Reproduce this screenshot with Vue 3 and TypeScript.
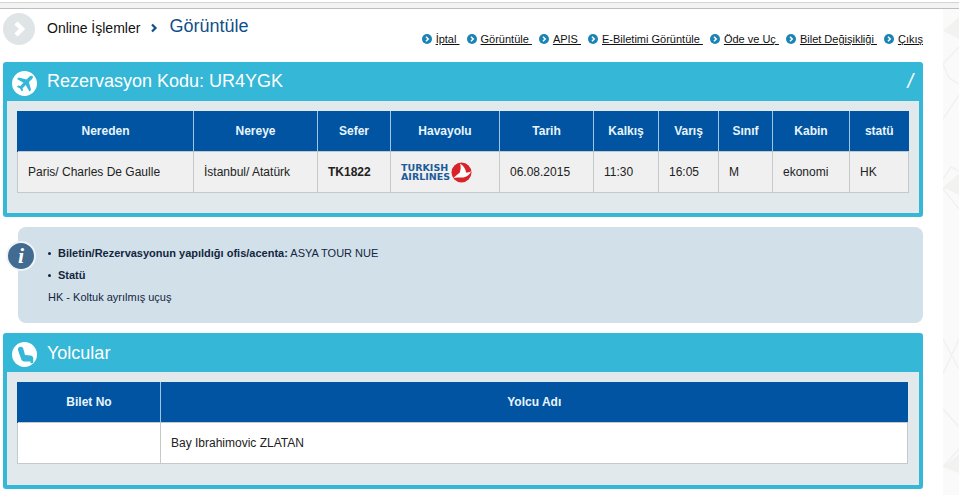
<template>
  <div class="page">
    <div class="topbar"></div>

    <!-- faint wallpaper on the right edge -->
    <svg class="wallpaper" width="16" height="486" viewBox="0 0 16 486">
      <path d="M16 38L0 55l6 14 10 6M0 110l16-24M0 170l8-12 8 4M16 200L0 180l16-8M0 330l16 30M16 330L0 365M0 400l16 18M16 440L0 458" fill="none" stroke="#f1f1f1" stroke-width="1.500" />
      <path d="M16 8L0 22l16 8zM16 165L0 178l16 8zM16 445L0 458l16 6z" fill="#f2f2f0" />
    </svg>

    <div class="crumbs">
      <span class="crumb-icon">
        <svg width="32" height="32" viewBox="0 0 32 32"><path d="M13 10l6 6-6 6" fill="none" stroke="#fff" stroke-width="4.5" /></svg>
      </span>
      <span class="crumb-text">Online İşlemler</span>
      <svg class="crumb-arrow" width="8" height="10" viewBox="0 0 8 10"><path d="M2 1.5L5.5 5 2 8.500" fill="none" stroke="#0f4f8a" stroke-width="2.2" /></svg>
      <span class="crumb-title">Görüntüle</span>
    </div>

    <div class="actions">
      <a v-for="link in links" :key="link" class="action">
        <span class="bullet">
          <svg width="10" height="10" viewBox="0 0 10 10"><path d="M4 2.8L6.2 5 4 7.2" fill="none" stroke="#fff" stroke-width="1.5" /></svg>
        </span>
        <span class="action-text">{{ link }}</span>
      </a>
    </div>

    <section class="panel first">
      <header class="panel-head">
        <span class="round">
          <svg width="22" height="22" viewBox="0 0 24 24"><path d="M20.500 3.500c-1-1-2.500-.7-3.500.3l-3.300 3.400-8.700-2.300-1.700 1.700 7 4.100-3.300 3.400-2.500-.4-1.300 1.300 3.400 1.900 1.900 3.400 1.300-1.300-.4-2.500 3.400-3.300 4.100 7 1.700-1.700-2.300-8.700 3.400-3.300c1-1 1.300-2.500.3-3.500z" fill="#35b7d8" /></svg>
        </span>
        <h2>Rezervasyon Kodu: UR4YGK</h2>
        <span class="slash">/</span>
      </header>
      <div class="panel-body">
        <table>
          <colgroup>
            <col v-for="(w, i) in flightCols" :key="i" :style="{ width: w + 'px' }" />
          </colgroup>
          <thead>
            <tr><th v-for="h in flightHead" :key="h">{{ h }}</th></tr>
          </thead>
          <tbody>
            <tr class="grey">
              <td>Paris/ Charles De Gaulle</td>
              <td>İstanbul/ Atatürk</td>
              <td><b>TK1822</b></td>
              <td class="logo-cell">
                <div class="thy">
                  <span class="thy-name">TURKISH<br />AIRLINES</span>
                  <svg width="21" height="21" viewBox="0 0 21 21">
                    <circle cx="10.5" cy="10.5" r="10" fill="#d8232a" />
                    <path d="M9 1.500C13 4 15 8 15 10.500 17 10.500 19 10 20 9 19 13 15 15.500 11 15.500 8 15.500 5 15 2.500 16 5 13.500 7 12 8.500 11 10 8 10 4 9 1.500z" fill="#fff" />
                  </svg>
                </div>
              </td>
              <td>06.08.2015</td>
              <td>11:30</td>
              <td>16:05</td>
              <td>M</td>
              <td>ekonomi</td>
              <td>HK</td>
            </tr>
          </tbody>
        </table>
      </div>
    </section>

    <div class="info">
      <span class="info-icon">i</span>
      <ul>
        <li><b>Biletin/Rezervasyonun yapıldığı ofis/acenta:</b> ASYA TOUR NUE</li>
        <li><b>Statü</b></li>
      </ul>
      <p>HK - Koltuk ayrılmış uçuş</p>
    </div>

    <section class="panel">
      <header class="panel-head">
        <span class="round">
          <svg width="22" height="22" viewBox="0 0 24 24"><path d="M5.500 3.500C7 2.500 9.500 3 10 4.700l2 7.300 6 .5c1.800.2 3 1.500 3 3.200V20c0 .6-.4 1-1 1h-2v-2H11c-1.500 0-2.500-.7-3-2L4.500 7C4 5.600 4.500 4.200 5.500 3.500z" fill="#35b7d8" /></svg>
        </span>
        <h2>Yolcular</h2>
      </header>
      <div class="panel-body">
        <table>
          <colgroup>
            <col style="width: 143px" />
            <col />
          </colgroup>
          <thead>
            <tr><th>Bilet No</th><th>Yolcu Adı</th></tr>
          </thead>
          <tbody>
            <tr>
              <td></td>
              <td>Bay Ibrahimovic ZLATAN</td>
            </tr>
          </tbody>
        </table>
      </div>
    </section>
  </div>
</template>

<script setup lang="ts">
const links: string[] = [
  'İptal ',
  'Görüntüle ',
  'APIS ',
  'E-Biletimi Görüntüle ',
  'Öde ve Uç ',
  'Bilet Değişikliği ',
  'Çıkış'
]

const flightHead: string[] = [
  'Nereden', 'Nereye', 'Sefer', 'Havayolu', 'Tarih',
  'Kalkış', 'Varış', 'Sınıf', 'Kabin', 'statü'
]

const flightCols: number[] = [176, 124, 73, 109, 94, 65, 60, 54, 77, 59]
</script>

<style>
html, body {
  background: #fff;
  overflow: hidden;
}
</style>

<style scoped>
.page {
  position: relative;
  width: 959px;
  height: 495px;
  font-family: "Liberation Sans", Arial, sans-serif;
  font-size: 12px;
  color: #222;
  overflow: hidden;
}
.wallpaper {
  position: absolute;
  left: 943px;
  top: 9px;
  background: #fafafa;
}
.topbar {
  height: 5px;
  margin-top: 2px;
  background: #f3f3f3;
  border-top: 1px solid #d4d4d4;
  border-bottom: 1px solid #bdbdbd;
}
.crumbs {
  display: flex;
  align-items: center;
  height: 32px;
  padding: 4px 0 0 3px;
}
.crumb-icon {
  width: 32px;
  height: 32px;
  border-radius: 50%;
  background: #dfe4e7;
  display: flex;
}
.crumb-text {
  margin: -3px 0 0 12px;
  font-size: 14px;
  color: #111;
}
.crumb-arrow {
  margin: -2px 0 0 10px;
}
.crumb-title {
  margin: -5px 0 0 11px;
  font-size: 18px;
  color: #0f4f8a;
}
.actions {
  display: flex;
  justify-content: flex-end;
  gap: 7px;
  width: 923px;
  margin-top: -13px;
  height: 14px;
}
.action {
  display: flex;
  align-items: center;
  font-size: 11px;
  color: #111;
}
.action-text {
  text-decoration: underline;
  white-space: pre;
}
.bullet {
  width: 10px;
  height: 10px;
  border-radius: 50%;
  background: #1b84b4;
  margin-right: 4px;
  display: flex;
}
.panel {
  width: 920px;
  margin-left: 3px;
  background: #35b7d8;
  border-radius: 3px;
  padding: 0 4px 4px;
  box-sizing: border-box;
}
.panel.first {
  margin-top: 16px;
}
.panel-head {
  height: 39px;
  display: flex;
  align-items: center;
  color: #fff;
}
.panel-head h2 {
  margin: 0 0 0 10px;
  font-size: 18px;
  font-weight: normal;
}
.panel:not(.first) h2 {
  margin-top: 2px;
}
.round {
  width: 25px;
  height: 25px;
  margin: 4px 0 0 5px;
  border-radius: 50%;
  background: #fff;
  display: flex;
  align-items: center;
  justify-content: center;
}
.slash {
  margin-left: auto;
  margin-right: 6px;
  font-size: 20px;
  font-style: italic;
}
.panel-body {
  background: #e2e9ec;
  padding: 10px 10px 21px;
}
.first .panel-body {
  padding-bottom: 20px;
}
table {
  width: 891px;
  table-layout: fixed;
  border-collapse: collapse;
}
th {
  height: 40px;
  padding: 0;
  background: #0054a2;
  color: #e8f4fb;
  font-size: 12px;
  border-left: 1px solid #9fc6e2;
}
th:first-child {
  border-left-color: #0054a2;
}
td {
  height: 40px;
  padding: 0 10px;
  background: #fff;
  border: 1px solid #c6c9ca;
  color: #222;
}
.grey td {
  background: #f0f0f0;
}
.logo-cell {
  padding: 0 10px;
}
.thy {
  display: flex;
  align-items: center;
  gap: 1px;
}
.thy-name {
  font-family: "DejaVu Sans", sans-serif;
  font-weight: bold;
  font-size: 9.5px;
  line-height: 9px;
  color: #1c5c99;
}
.info {
  position: relative;
  width: 905px;
  height: 96px;
  margin: 10px 0 10px 18px;
  padding: 1px 0 0 30px;
  box-sizing: border-box;
  background: #d2e0ea;
  border-radius: 8px;
  font-size: 11px;
  color: #12263e;
}
.info-icon {
  position: absolute;
  left: -12px;
  top: 14px;
  width: 26px;
  height: 26px;
  border: 2px solid #eef3f6;
  border-radius: 50%;
  background: #416b90;
  color: #fff;
  font-family: "Liberation Serif", serif;
  font-size: 22px;
  font-weight: bold;
  font-style: italic;
  line-height: 26px;
  text-align: center;
}
.info ul {
  margin: 17px 0 0;
  padding: 0;
  list-style: none;
}
.info li {
  height: 22px;
  line-height: 16px;
}
.info li::before {
  content: "";
  display: inline-block;
  width: 3px;
  height: 3px;
  margin: 0 7px 2px 0;
  border-radius: 50%;
  background: #12263e;
}
.info p {
  margin: -3px 0 0;
  line-height: 22px;
}
</style>
